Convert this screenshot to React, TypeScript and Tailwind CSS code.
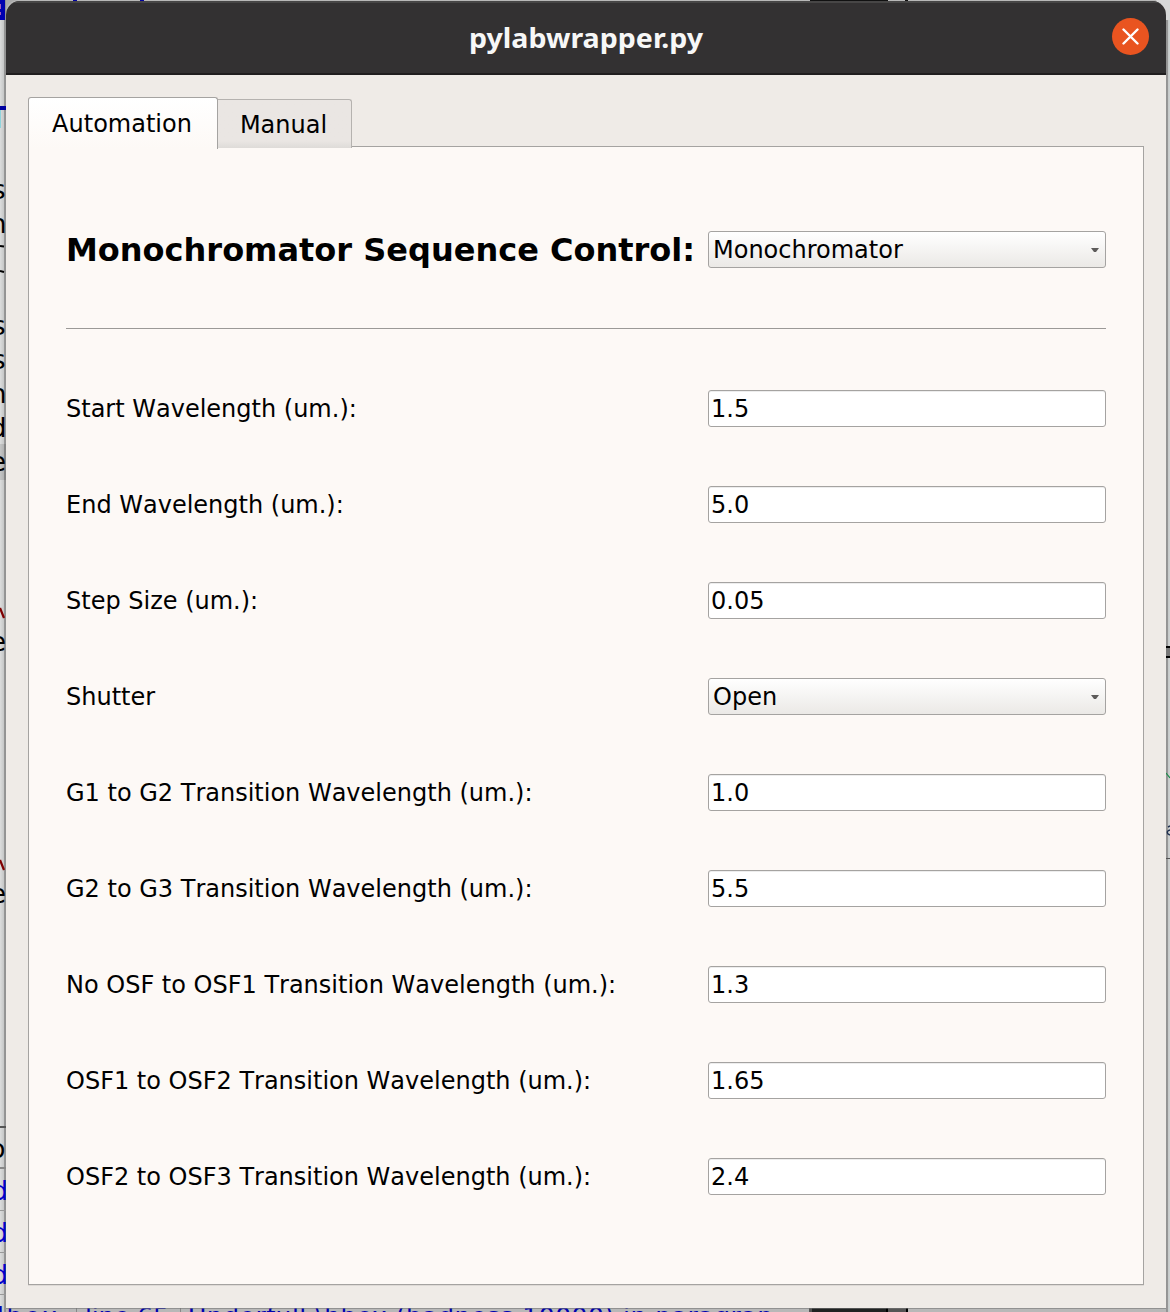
import { useState } from "react";

type Field = { label: string; value: string; kind?: "select" };

const fields: Field[] = [
  { label: "Start Wavelength (um.):", value: "1.5" },
  { label: "End Wavelength (um.):", value: "5.0" },
  { label: "Step Size (um.):", value: "0.05" },
  { label: "Shutter", value: "Open", kind: "select" },
  { label: "G1 to G2 Transition Wavelength (um.):", value: "1.0" },
  { label: "G2 to G3 Transition Wavelength (um.):", value: "5.5" },
  { label: "No OSF to OSF1 Transition Wavelength (um.):", value: "1.3" },
  { label: "OSF1 to OSF2 Transition Wavelength (um.):", value: "1.65" },
  { label: "OSF2 to OSF3 Transition Wavelength (um.):", value: "2.4" },
];

// Editor glyphs peeking out left of the dialog; y is the text baseline.
const editorGlyphs = [
  { t: "s", y: 199, c: "#000", x: -8 },
  { t: "n", y: 233, c: "#000", x: -10 },
  { t: "s", y: 335, c: "#000", x: -8 },
  { t: "s", y: 369, c: "#000", x: -8 },
  { t: "n", y: 403, c: "#000", x: -10 },
  { t: "d", y: 437, c: "#000", x: -10 },
  { t: "e", y: 471, c: "#000", x: -10 },
  { t: "e", y: 651, c: "#000", x: -10 },
  { t: "e", y: 903, c: "#000", x: -10 },
  { t: "o", y: 1158, c: "#000", x: -10.5 },
  { t: "d", y: 1200, c: "#0000cc", x: -8.5 },
  { t: "d", y: 1242, c: "#0000cc", x: -8.5 },
  { t: "d", y: 1284, c: "#0000cc", x: -8.5 },
];

function Desktop() {
  return (
    <svg className="absolute inset-0" width="1170" height="1312" fontFamily="'DejaVu Sans'" fontSize="26">
      <defs>
        <linearGradient id="left" x1="0" x2="1">
          <stop offset="0" stopColor="#dcdddd" />
          <stop offset="0.6" stopColor="#c8c9c9" />
          <stop offset="0.67" stopColor="#969696" />
          <stop offset="1" stopColor="#929292" />
        </linearGradient>
        <linearGradient id="right" x1="0" x2="1">
          <stop offset="0" stopColor="#929292" />
          <stop offset="0.45" stopColor="#979797" />
          <stop offset="0.5" stopColor="#c4c8c8" />
          <stop offset="1" stopColor="#d0d3d3" />
        </linearGradient>
      </defs>
      <rect width="1170" height="1312" fill="#b8b8b8" />
      <rect width="6" height="1312" fill="url(#left)" />
      <rect x="1166" width="4" height="1312" fill="url(#right)" />
      <path d="M6 0h12q-12 1-12 14z" fill="#aaa" />
      <path d="M1156 0h14v20h-4z" fill="#d8d8d8" />
      <rect x="0" y="0" width="5" height="20" fill="#0000b0" />
      <path d="M0 4h1v5H0zM0 12h1v3H0z" fill="#a060c0" />
      <rect x="0" y="106" width="6" height="4" fill="#0000a0" />
      <rect x="0" y="110" width="1" height="18" fill="#8fd4dc" />
      <path d="M73 0h4v1h-4zM140 0h4v1h-4z" fill="#0000a0" />
      <path d="M810 0h78v1h-78zM905 0h3v1h-3z" fill="#111" />
      <rect x="0" y="444" width="6" height="36" fill="#000" opacity="0.1" />
      <path d="M0 246l4 0.6M0 271l4 1" stroke="#000" strokeWidth="2" />
      <path d="M0 608l4 10M0 860l4 10" stroke="#800000" strokeWidth="2.2" />
      {editorGlyphs.map((g) => (
        <text key={g.y} x={g.x} y={g.y} fill={g.c}>{g.t}</text>
      ))}
      <rect y="1126" width="6" height="2" fill="#555" />
      <rect y="1167" width="6" height="2" fill="#888" />
      <path d="M0 1210h6v1H0zM0 1252h6v1H0zM0 1294h6v1H0z" fill="#999" />
      <path d="M1166 646h4v2h-4zM1166 656h4v2h-4z" fill="#000" />
      <rect x="1166" y="648" width="4" height="8" fill="#777" />
      <path d="M1166 773l4 5" stroke="#168b45" strokeWidth="1.2" />
      <path d="M1170 826l-2 1M1170 830q-4 1-2 4l2 1" stroke="#203050" strokeWidth="1.4" fill="none" />
      <rect x="1166" y="858" width="4" height="1" fill="#555" />
      <g fill="#0000b0" fontSize="25">
        <text x="-12" y="1325" textLength="69">dbox</text>
        <text x="85" y="1325" textLength="84">line 65</text>
        <text x="188" y="1325" textLength="585">Underfull \hbox (badness 10000) in paragrap</text>
      </g>
      <path d="M76 1308h1v4h-1zM180 1308h1v4h-1z" fill="#888" />
      <rect x="809" y="1308" width="99" height="4" fill="#555" />
      <rect x="812" y="1308" width="74" height="4" fill="#202222" />
      <path d="M886 1308h2v4h-2zM906 1308h2v4h-2z" fill="#000" />
      <rect x="6" y="1308" width="1160" height="1" fill="#777" opacity="0.6" />
    </svg>
  );
}

function SelectBox({ value }: { value: string }) {
  return (
    <div className="flex h-[37px] w-[398px] items-center justify-between rounded-[3px] border border-[#a5a3a1] bg-linear-to-b from-white to-[#ebe9e6] pr-[6px] pl-1">
      <span>{value}</span>
      <svg width="8" height="4" viewBox="0 0 8 4" className="mt-px">
        <path d="M0 0H8L5 4H3Z" fill="#5d5b5a" />
      </svg>
    </div>
  );
}

function TextBox({ initial, label }: { initial: string; label: string }) {
  const [value, setValue] = useState(initial);
  return (
    <input
      aria-label={label}
      value={value}
      onChange={(e) => setValue(e.target.value)}
      className="h-[37px] w-[398px] rounded-[3px] border border-[#a5a3a1] bg-white pl-[2px] shadow-[inset_0_1px_0_#ededed] outline-none"
    />
  );
}

export default function App() {
  return (
    <div className="relative h-[1312px] w-[1170px] overflow-hidden font-['DejaVu_Sans',sans-serif] text-[24px] leading-7 text-black">
      <Desktop />
      <main className="relative mt-px ml-[6px] flex h-[1307px] w-[1160px] flex-col overflow-hidden rounded-t-[14px] bg-[#efebe7]">
        <header className="flex h-[74px] shrink-0 items-center border-t-2 border-b-2 border-t-[#474646] border-b-[#201e1f] bg-[#333132] pr-[17.5px] pl-[53.5px]">
          <h1 className="flex-1 pt-[2px] text-center font-['Noto_Sans',sans-serif] text-[27px] font-bold text-[#f7f7f7]">
            <svg width="236" height="40" className="mx-auto block">
              <text x="1" y="29" textLength="234" lengthAdjust="spacingAndGlyphs" fill="#f7f7f7">pylabwrapper.py</text>
            </svg>
          </h1>
          <button aria-label="Close" className="mb-[3px] grid size-[37px] place-items-center rounded-full bg-[#e95420]">
            <svg width="17" height="17" viewBox="0 0 17 17" stroke="white" strokeWidth="2.4" strokeLinecap="round">
              <path d="M1.5 1.5L15.5 15.5M15.5 1.5L1.5 15.5" />
            </svg>
          </button>
        </header>
        <nav className="relative z-10 ml-[22px] mt-[22px] flex h-[52px] shrink-0 items-start">
          <button className="h-[52px] w-[190px] rounded-t-[3px] border border-b-0 border-[#a5a3a1] bg-linear-to-b from-white to-[#fdf9f6] pr-[2px]">Automation</button>
          <button className="mt-[2px] h-[49px] w-[134px] rounded-tr-[3px] border border-b-0 border-l-0 border-[#b5b2af] bg-linear-to-b from-[#eae6e3] from-85% to-[#dedbd8] pt-[2px] pr-[2px]">Manual</button>
        </nav>
        <section className="mt-[-3px] ml-[22px] h-[1139px] w-[1116px] shrink-0 border border-[#a5a3a1] bg-[#fdf9f6] px-[37px] pt-[84px] shadow-[0_1px_0_#dedad6]">
          <div className="flex h-[37px] items-center justify-between">
            <h2 className="text-[32px] font-bold whitespace-nowrap">Monochromator Sequence Control:</h2>
            <SelectBox value="Monochromator" />
          </div>
          <hr className="mt-[60px] border-t border-[#9b9997]" />
          <div className="mt-[61px] flex flex-col gap-[59px]">
            {fields.map((f) => (
              <div key={f.label} className="flex h-[37px] items-center justify-between">
                <span className="whitespace-nowrap [font-kerning:none]">{f.label}</span>
                {f.kind === "select" ? <SelectBox value={f.value} /> : <TextBox initial={f.value} label={f.label} />}
              </div>
            ))}
          </div>
        </section>
      </main>
    </div>
  );
}
